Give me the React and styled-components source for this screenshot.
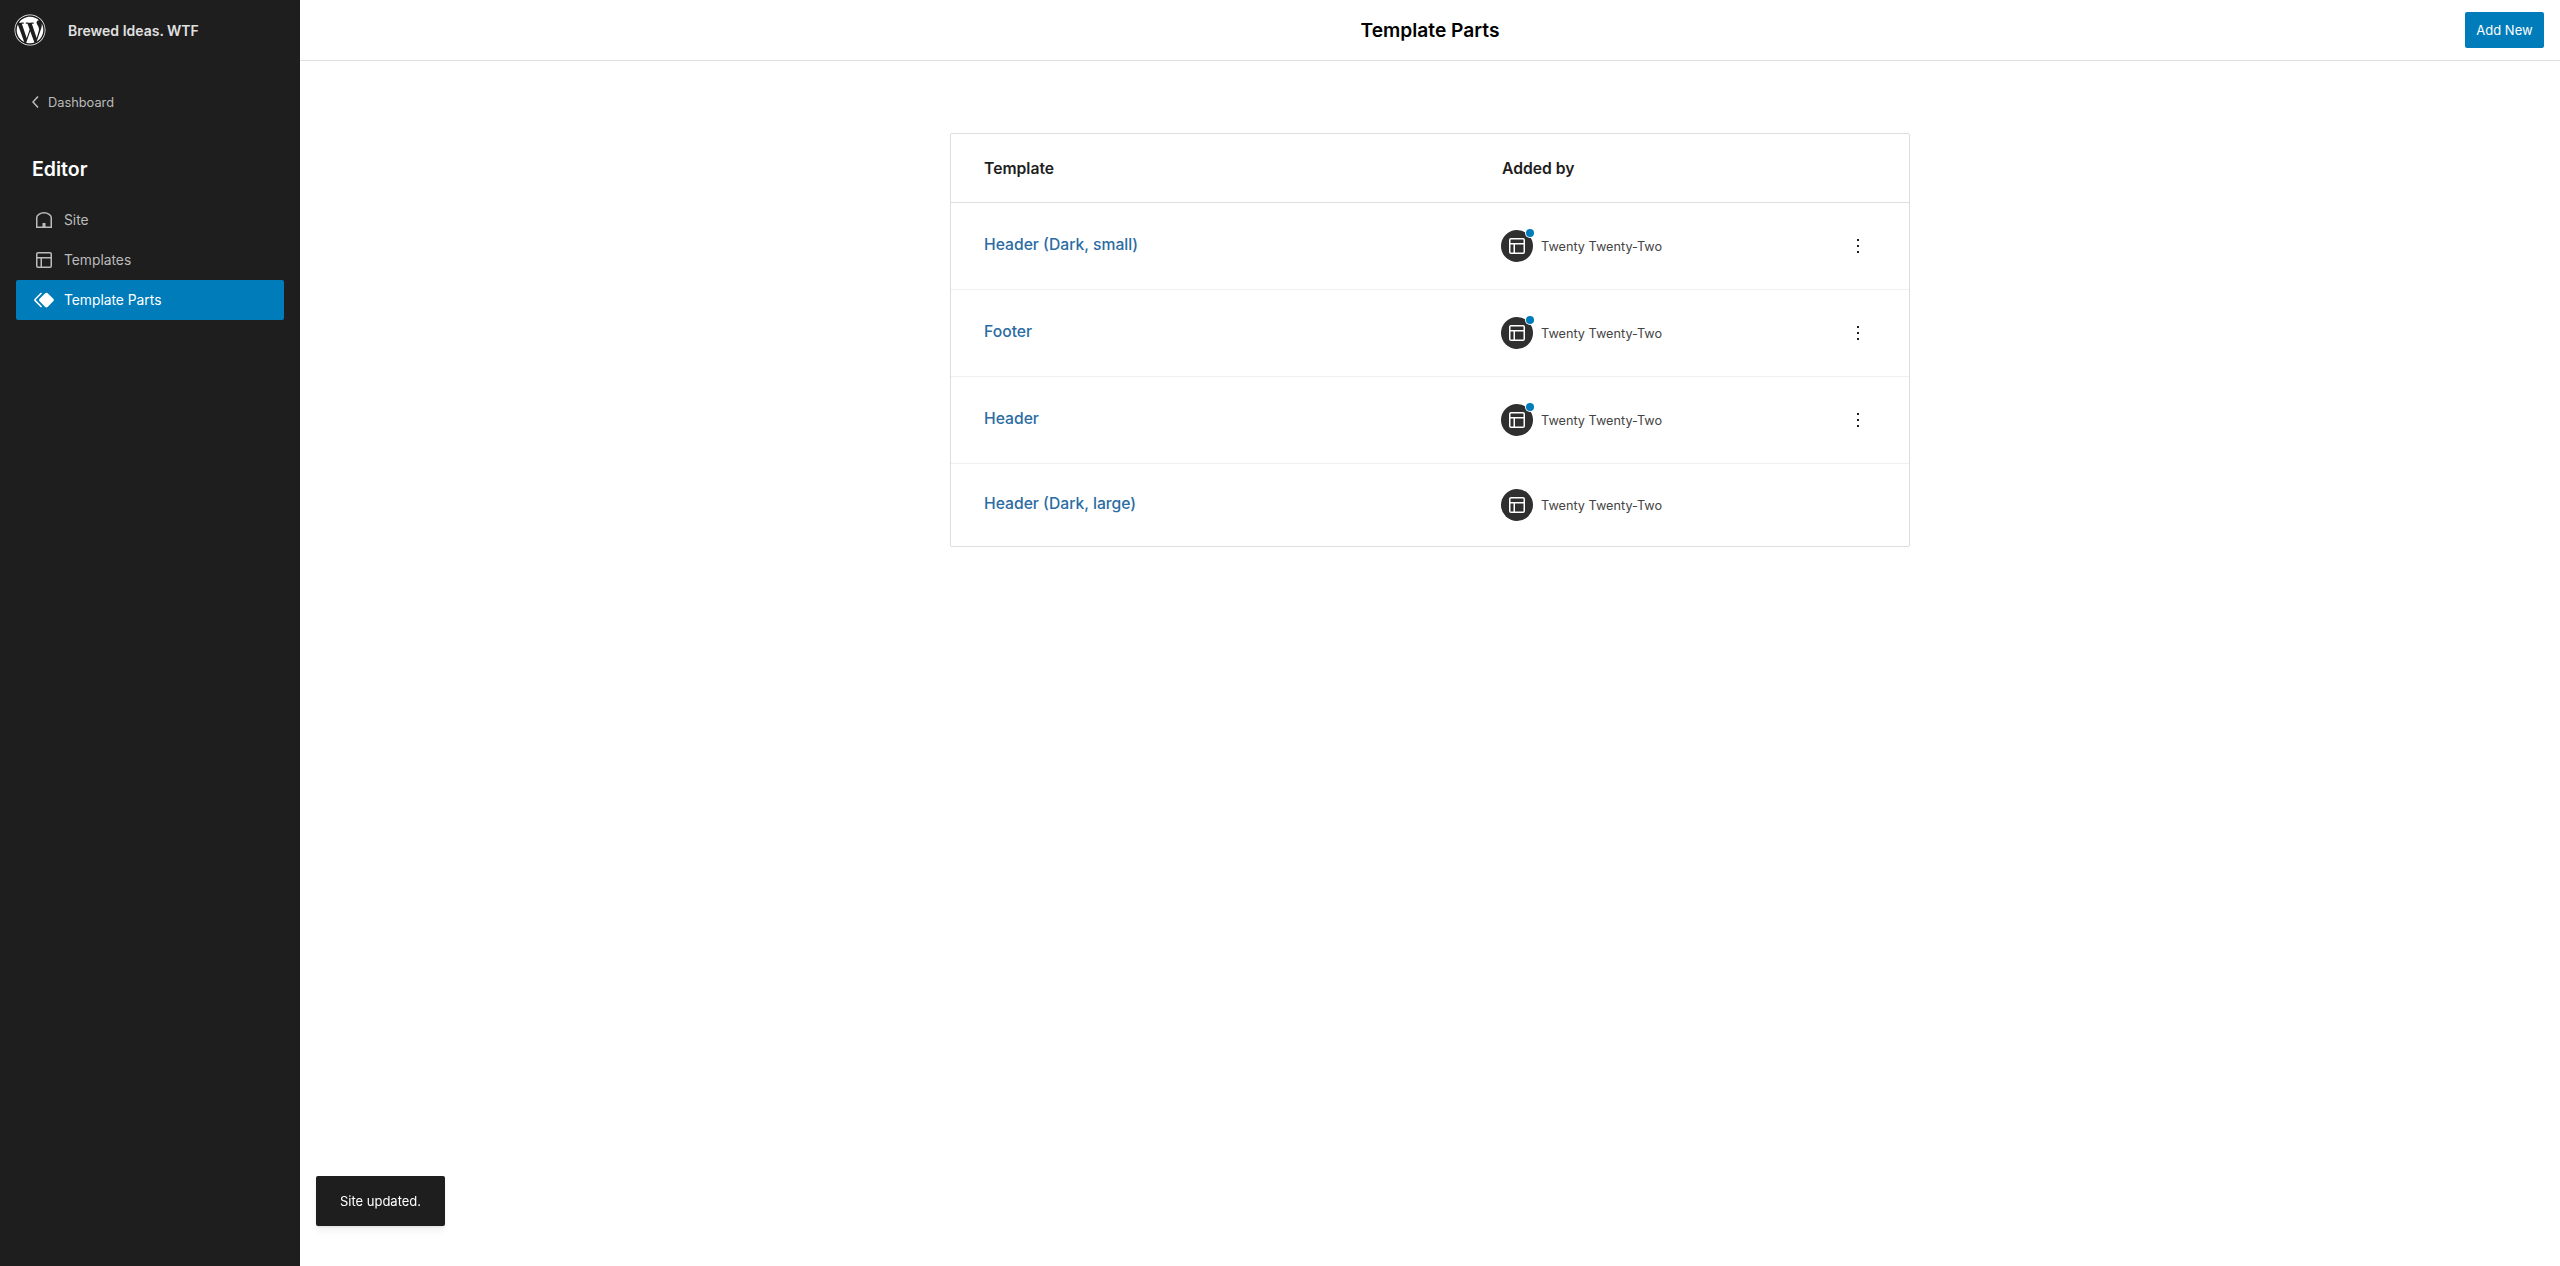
import React from 'react';
import styled, { createGlobalStyle } from 'styled-components';
import { FaWordpress } from 'react-icons/fa';

const GlobalStyle = createGlobalStyle`
  html, body {
    margin: 0;
    padding: 0;
    height: 100%;
    background: #fff;
    font-family: Inter, "Noto Sans", "Liberation Sans", sans-serif;
    -webkit-font-smoothing: antialiased;
  }
`;

const parts = [
  { name: 'Header (Dark, small)', customized: true },
  { name: 'Footer', customized: true },
  { name: 'Header', customized: true },
  { name: 'Header (Dark, large)', customized: false },
];

const HomeIcon = () => (
  <svg viewBox="0 0 24 24" width="24" height="24" fill="none">
    <path
      d="M4.75 19.25V9.6C4.75 7.2 8 4.75 12 4.75s7.25 2.45 7.25 4.85v9.65z"
      stroke="currentColor"
      strokeWidth="1.5"
    />
    <rect x="10.5" y="15" width="3" height="4.5" fill="currentColor" />
  </svg>
);

const LayoutIcon = () => (
  <svg viewBox="0 0 24 24" width="24" height="24" fill="currentColor">
    <path d="M18 5.5H6a.5.5 0 00-.5.5v3h13V6a.5.5 0 00-.5-.5zm.5 5H10v8h8a.5.5 0 00.5-.5v-7.5zm-10 0h-3V18a.5.5 0 00.5.5h2.5v-8zM6 4h12a2 2 0 012 2v12a2 2 0 01-2 2H6a2 2 0 01-2-2V6a2 2 0 012-2z" />
  </svg>
);

const SymbolIcon = () => (
  <svg viewBox="0 0 24 24" width="24" height="24" fill="currentColor">
    <path d="M21.3 10.8l-5.6-5.6c-.7-.7-1.8-.7-2.5 0l-5.6 5.6c-.7.7-.7 1.8 0 2.5l5.6 5.6c.3.3.8.5 1.2.5s.9-.2 1.2-.5l5.6-5.6c.8-.7.8-1.9.1-2.5zm-17.6 1L10 5.5l-1-1-6.3 6.3c-.7.7-.7 1.8 0 2.5L9 19.5l1.1-1.1-6.3-6.3c-.2 0-.2-.2-.1-.3z" />
  </svg>
);

const ChevronLeftIcon = () => (
  <svg viewBox="0 0 24 24" width="24" height="24" fill="currentColor">
    <path d="M14.6 7l-1.2-1L8 12l5.4 6 1.2-1-4.6-5z" />
  </svg>
);

const MoreIcon = () => (
  <svg viewBox="0 0 24 24" width="24" height="24" fill="currentColor">
    <path d="M13 19h-2v-2h2v2zm0-6h-2v-2h2v2zm0-6h-2V5h2v2z" />
  </svg>
);

function App() {
  return (
    <Page>
      <GlobalStyle />
      <Sidebar>
        <Brand>
          <FaWordpress size={32} color="#fff" />
          <SiteName>Brewed Ideas. WTF</SiteName>
        </Brand>
        <BackLink>
          <ChevronLeftIcon />
          Dashboard
        </BackLink>
        <SectionTitle>Editor</SectionTitle>
        <Nav>
          <NavItem>
            <HomeIcon />
            Site
          </NavItem>
          <NavItem>
            <LayoutIcon />
            Templates
          </NavItem>
          <NavItem $active>
            <SymbolIcon />
            Template Parts
          </NavItem>
        </Nav>
      </Sidebar>
      <Main>
        <TopBar>
          <PageTitle>Template Parts</PageTitle>
          <AddButton>Add New</AddButton>
        </TopBar>
        <Content>
          <Table>
            <HeadRow>
              <NameCell>Template</NameCell>
              <div>Added by</div>
            </HeadRow>
            {parts.map((part) => (
              <Row key={part.name} $customized={part.customized}>
                <NameCell>
                  <PartLink>{part.name}</PartLink>
                </NameCell>
                <Author>
                  <Avatar $customized={part.customized}>
                    <LayoutIcon />
                  </Avatar>
                  Twenty Twenty-Two
                </Author>
                {part.customized && (
                  <MoreButton>
                    <MoreIcon />
                  </MoreButton>
                )}
              </Row>
            ))}
          </Table>
        </Content>
      </Main>
      <Snackbar>Site updated.</Snackbar>
    </Page>
  );
}

const Page = styled.div`
  display: flex;
  height: 100vh;
  overflow: hidden;
`;

const Sidebar = styled.aside`
  width: 300px;
  flex-shrink: 0;
  background: #1e1e1e;
  color: #fff;
`;

const Brand = styled.div`
  display: flex;
  align-items: center;
  gap: 22px;
  height: 60px;
  padding-left: 14px;
`;

const SiteName = styled.div`
  font-size: 14px;
  font-weight: 600;
  color: #e0e0e0;
`;

const BackLink = styled.div`
  display: flex;
  align-items: center;
  margin: 24px 0 0 24px;
  height: 36px;
  font-size: 12.8px;
  color: #bbb;

  svg {
    flex-shrink: 0;
  }
`;

const SectionTitle = styled.h2`
  margin: 33px 0 0 32px;
  font-size: 19.5px;
  line-height: 32px;
  font-weight: 600;
  color: #fff;
`;

const Nav = styled.nav`
  display: flex;
  flex-direction: column;
  margin: 15px 16px 0;
`;

const NavItem = styled.a`
  display: flex;
  align-items: center;
  gap: 8px;
  height: 40px;
  padding-left: 16px;
  border-radius: 2px;
  font-size: 13.8px;
  color: ${(props) => (props.$active ? '#fff' : '#bbb')};
  background: ${(props) => (props.$active ? '#007cba' : 'transparent')};
`;

const Main = styled.main`
  flex: 1;
  min-width: 0;
  display: flex;
  flex-direction: column;
`;

const TopBar = styled.header`
  position: relative;
  display: flex;
  align-items: center;
  justify-content: center;
  height: 60px;
  border-bottom: 1px solid #e0e0e0;
`;

const PageTitle = styled.h1`
  margin: 0;
  font-size: 19.2px;
  font-weight: 600;
  color: #000;
`;

const AddButton = styled.button`
  position: absolute;
  right: 16px;
  top: 12px;
  width: 79px;
  height: 36px;
  padding: 0;
  border: 0;
  border-radius: 2px;
  background: #007cba;
  color: #fff;
  font: 400 13px Inter, sans-serif;
`;

const Content = styled.div`
  padding-top: 72px;
  display: flex;
  justify-content: center;
`;

const Table = styled.div`
  width: 960px;
  box-sizing: border-box;
  border: 1px solid #ddd;
  border-radius: 2px;
`;

const HeadRow = styled.div`
  box-sizing: border-box;
  display: flex;
  align-items: center;
  height: 69px;
  border-bottom: 1px solid #ddd;
  font-size: 15.7px;
  font-weight: 600;
  color: #1e1e1e;
`;

const Row = styled.div`
  box-sizing: border-box;
  display: flex;
  align-items: center;
  height: 87px;
  border-bottom: 1px solid #f0f0f0;

  &:last-child {
    height: 82px;
    border-bottom: 0;
  }
`;

const NameCell = styled.div`
  box-sizing: border-box;
  width: 551px;
  padding-left: 33px;
`;

const PartLink = styled.a`
  position: relative;
  top: -2px;
  font-size: 15.7px;
  font-weight: 500;
  color: #2b6ca3;
`;

const Author = styled.div`
  display: flex;
  align-items: center;
  gap: 8px;
  margin-left: -1px;
  font-size: 12.7px;
  color: #444;
`;

const Avatar = styled.div`
  position: relative;
  display: flex;
  align-items: center;
  justify-content: center;
  width: 32px;
  height: 32px;
  border-radius: 50%;
  background: #2f2f2f;
  color: #fff;

  ${(props) =>
    props.$customized &&
    `
    &::after {
      content: '';
      position: absolute;
      top: -1px;
      right: -1px;
      width: 8px;
      height: 8px;
      border-radius: 50%;
      background: #007cba;
      box-shadow: 0 0 0 1px #fff;
    }
  `}
`;

const MoreButton = styled.div`
  display: flex;
  align-items: center;
  justify-content: center;
  width: 36px;
  height: 36px;
  margin-left: auto;
  margin-right: 33px;
  color: #1e1e1e;
`;

const Snackbar = styled.div`
  position: fixed;
  left: 316px;
  top: 1176px;
  box-sizing: border-box;
  width: 129px;
  height: 50px;
  display: flex;
  align-items: center;
  justify-content: center;
  border-radius: 2px;
  background: #1e1e1e;
  color: #fff;
  font-size: 13px;
  box-shadow: 0 1px 2px rgba(0, 0, 0, 0.05), 0 2px 3px rgba(0, 0, 0, 0.04),
    0 6px 6px rgba(0, 0, 0, 0.03), 0 8px 8px rgba(0, 0, 0, 0.02);
`;

export default App;
